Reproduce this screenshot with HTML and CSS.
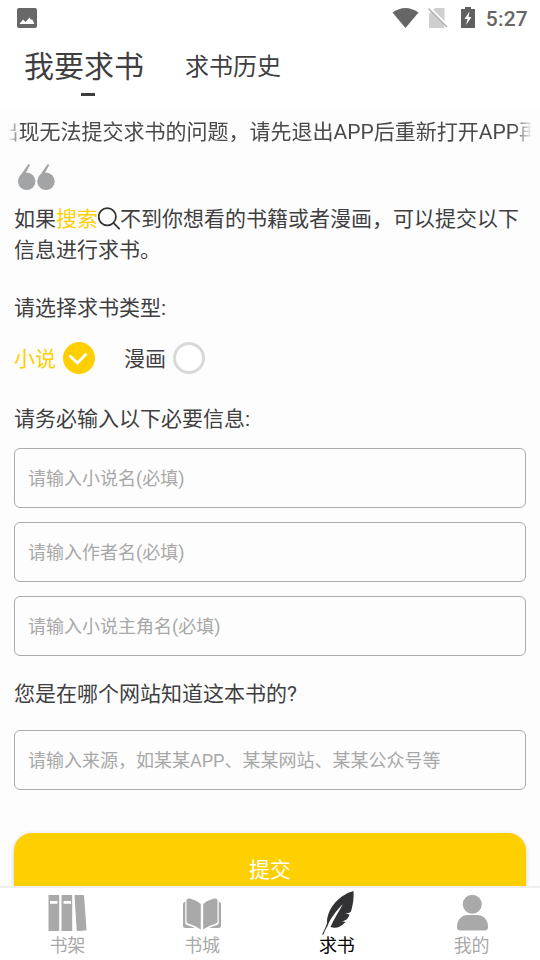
FILE: index.html
```html
<!DOCTYPE html>
<html lang="zh-CN">
<head>
<meta charset="utf-8">
<title>我要求书</title>
<link rel="stylesheet" href="styles.css">
</head>
<body>
<div class="app">
  <header class="header">
    <div class="status">
      <svg class="status-photo" width="20" height="20" viewBox="0 0 20 20"><rect width="20" height="20" rx="2" fill="#686868"/><path d="M2.500 16l3.500-4.500 2.500 2.500 4-4.500 1.500 2.500 1-1 2.500 5z" fill="#fff"/></svg>
      <div class="status-right">
        <svg width="27" height="22" viewBox="0 0 27 22"><path d="M.5 5.500Q13.500-3.500 26.500 5.500L13.500 21z" fill="#666"/></svg>
        <svg width="20" height="22" viewBox="0 0 20 22"><path d="M7 1h9.500v20H1V7z" fill="#cfcfcf"/><path d="M1.500.5l19 19" stroke="#fff" stroke-width="2"/><path d="M.5 1.500l18.500 18.500" stroke="#b5b5b5" stroke-width="1.600"/></svg>
        <svg width="14" height="22" viewBox="0 0 14 22"><path d="M4 0h6v2h4v19H0V2h4z" fill="#606060"/><path d="M8.500 4.500L3.500 12h3L5 18 10.500 10H7.500z" fill="#fff"/></svg>
        <span class="clock">5:27</span>
      </div>
    </div>
    <nav class="tabs">
      <div class="tab tab-active">我要求书</div>
      <div class="tab">求书历史</div>
    </nav>
  </header>
  <main class="content">
    <div class="marquee"><span>出现无法提交求书的问题，请先退出APP后重新打开APP再</span></div>
    <svg class="quote" width="38" height="28" viewBox="0 0 38 28" fill="#a2a4a6"><circle cx="8.700" cy="18.300" r="8.700"/><circle cx="28" cy="18.300" r="8.700"/><path d="M1 14.500L10.500 1 12 2 7 11zM20.300 14.500L29.800 1l1.500 1L26.300 11z"/></svg>
    <p class="intro">如果<span class="accent">搜索</span><svg class="search" width="22" height="23" viewBox="0 0 22 23" fill="none" stroke="#333" stroke-width="1.800"><circle cx="9.300" cy="9.800" r="8.600"/><path d="M15.400 15.900l6.300 6.300"/></svg>不到你想看的书籍或者漫画，可以提交以下信息进行求书。</p>
    <h2 class="label">请选择求书类型:</h2>
    <div class="options">
      <div class="option accent"><span>小说</span><svg width="32" height="32" viewBox="0 0 32 32"><circle cx="16" cy="16" r="16" fill="#ffcf00"/><path d="M6.500 13.500l8 7.500L23.500 11.500" fill="none" stroke="#fff" stroke-width="2.800"/></svg></div>
      <div class="option"><span>漫画</span><span class="radio"></span></div>
    </div>
    <h2 class="label label-required">请务必输入以下必要信息:</h2>
    <div class="fields">
      <input class="field" placeholder="请输入小说名(必填)">
      <input class="field" placeholder="请输入作者名(必填)">
      <input class="field" placeholder="请输入小说主角名(必填)">
    </div>
    <h2 class="label label-source">您是在哪个网站知道这本书的?</h2>
    <input class="field" placeholder="请输入来源，如某某APP、某某网站、某某公众号等">
    <button class="submit">提交</button>
  </main>
  <nav class="bottom">
    <div class="item"><svg width="40" height="40" viewBox="0 0 40 40" fill="#a9a9a9"><path d="M1.500 3h10.700v36H1.500zM14.500 3h10.700v36H14.500zM27.500 3.500q0-.5 1-.5h7.500q1 0 1.100 1L39.500 37.500q0 1-1 1L31 39q-1.200 0-1.300-1z"/><path d="M3 9h7.500v2.700H3zM16.500 9H24v2.700h-7.500z" fill="#fff"/></svg><span>书架</span></div>
    <div class="item"><svg width="40" height="40" viewBox="0 0 40 40" fill="#a9a9a9"><path d="M4.500 8.500Q4.500 6 8 6.500 14 8 18.800 12V37.500Q12 33 6 31.500 4.500 31 4.500 29.500zM35.500 8.500Q35.500 6 32 6.500 26 8 21.200 12V37.500Q28 33 34 31.500 35.500 31 35.500 29.500z"/><path d="M3.300 9.500Q1 10 1 12V33.500Q1 36 3.500 36H13L9.500 34.500 5 33Q3.300 32.500 3.300 30.500zM36.700 9.500Q39 10 39 12V33.500Q39 36 36.500 36H27l3.500-1.500L35 33q1.700-.5 1.700-2.500z"/></svg><span>书城</span></div>
    <div class="item item-active"><svg width="40" height="46" viewBox="0 0 40 46"><path d="M36.500 1C25 4 10 16 10 33Q9 37 5 44.500L6.300 44.700Q8 40 10.500 36C14 27 20 20 26 14C22 21 17 29 13.500 37C19 39 24 37 28.500 32L24.500 31C28 31.500 31.500 28.500 32.500 24.500L28 23.500Q32 24 34 21.500C36 15 37 8 36.500 1z" fill="#323235"/></svg><span>求书</span></div>
    <div class="item"><svg width="40" height="40" viewBox="0 0 40 40" fill="#a9a9a9"><circle cx="20.300" cy="12.300" r="9.500"/><path d="M16 23h9c6 0 11 4.500 11 11.500 0 3-1 4-4 4H9c-3 0-4-1-4-4C5 27.500 10 23 16 23z"/></svg><span>我的</span></div>
  </nav>
</div>
</body>
</html>
```
FILE: styles.css
```css
* { box-sizing: border-box; }
body { margin: 0; color: #3f3f42; font-family: Roboto, "Noto Sans CJK SC", sans-serif; }
svg { display: block; flex: none; }
.app { height: 960px; display: flex; flex-direction: column; background: #fdfdfd; overflow: hidden; }
.header { height: 108px; flex: none; background: #fff; }
.status { height: 36px; padding: 0 12px 0 17px; display: flex; align-items: center; justify-content: space-between; }
.status-right { display: flex; align-items: center; }
.status-right svg { margin-top: -1px; }
.status-right svg:nth-child(2) { margin-left: 9px; }
.status-right svg:nth-child(3) { margin-left: 13px; }
.clock { margin-left: 11px; font-size: 21px; line-height: 36px; letter-spacing: .2px; color: #666; font-weight: 500; padding-top: 1px; }
.tabs { display: flex; gap: 41px; padding: 1px 0 0 24px; }
.tab { font-size: 24px; line-height: 60px; }
.tab-active { font-size: 30px; display: flex; flex-direction: column; }
.tab-active::after { content: ""; width: 14px; height: 3px; margin: -4px 0 0 57px; background: #3f3f42; }
.content { flex: 1; min-height: 0; padding: 0 14px; overflow: hidden; }
.marquee { height: 48px; margin: 0 -6px; overflow: hidden; white-space: nowrap; font-size: 21px; line-height: 48px; color: #4a4a4a;
  -webkit-mask-image: linear-gradient(90deg, transparent, #000 14px, #000 calc(100% - 18px), transparent);
  mask-image: linear-gradient(90deg, transparent, #000 14px, #000 calc(100% - 18px), transparent); }
.marquee span { margin-left: -10.500px; }
.quote { margin: 7px 0 0 4px; }
.intro { margin: 13px 0 0; font-size: 21px; line-height: 31px; }
.accent { color: #ffcf00; }
.search { display: inline-block; vertical-align: -4px; }
.label { margin: 27px 0 0; font-size: 21px; line-height: 31px; font-weight: 400; }
.options { display: flex; gap: 29px; height: 32px; margin-top: 18px; }
.option { display: flex; align-items: center; gap: 7px; font-size: 21px; line-height: 32px; }
.option > span:first-child { padding-top: 2px; }
.radio { width: 32px; height: 32px; border: 3px solid #d8d8d8; border-radius: 50%; background: #fff; }
.label-required { margin-top: 30px; }
.fields { display: flex; flex-direction: column; gap: 14px; margin-top: 13px; }
.field { display: block; width: 100%; height: 60px; padding: 0 13px; border: 1px solid #ababab; border-radius: 6px; background: transparent; font: 18px Roboto, "Noto Sans CJK SC", sans-serif; }
.field::placeholder { color: #a8a8a8; opacity: 1; }
.label-source { margin: 23px 0 20px; }
.submit { display: block; width: 100%; height: 72px; margin-top: 43px; padding: 0 0 2px; border: 0; border-radius: 18px; background: #ffcf00; box-shadow: 0 1px 4px rgba(0,0,0,.2); color: #fff; font: 21px Roboto, "Noto Sans CJK SC", sans-serif; }
.bottom { height: 74px; flex: none; display: grid; grid-template-columns: repeat(4, 1fr); padding-right: 1px; background: #fff; border-top: 2px solid #eee; }
.item { display: flex; flex-direction: column; align-items: center; padding-top: 4px; color: #a9a9a9; font-size: 18px; line-height: 24px; }
.item span { margin-top: 2px; }
.item-active { padding-top: 2px; color: #000; }
.item-active span { margin-top: -2px; }
```
